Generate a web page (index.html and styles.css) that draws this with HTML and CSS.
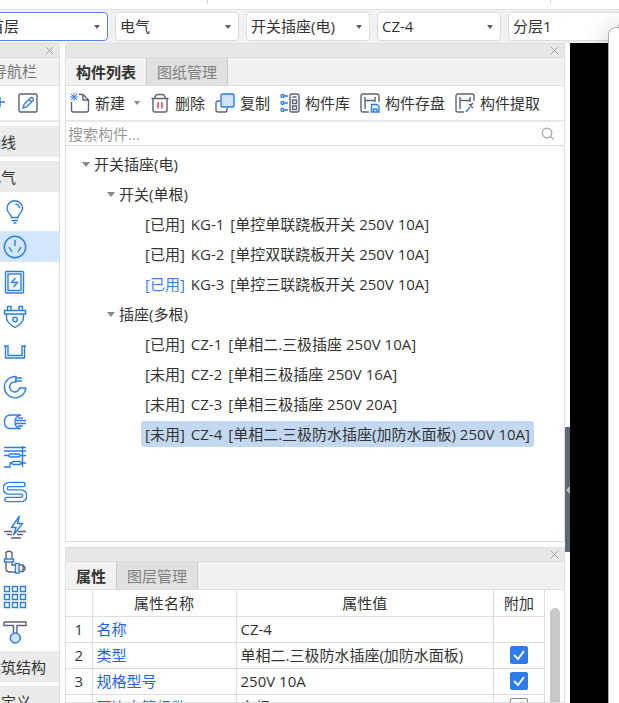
FILE: index.html
```html
<!DOCTYPE html>
<html lang="zh-CN">
<head>
    <meta charset="UTF-8">
    <meta name="viewport" content="width=device-width, initial-scale=1.0">
    <title>构件列表</title>
    <link rel="stylesheet" href="styles.css">
</head>
<body>
    <div class="ribbon"><span></span><span></span></div>

    <div class="selector-bar">
        <select class="floor active" aria-label="楼层"><option>首层</option></select>
        <select class="major" aria-label="专业"><option>电气</option></select>
        <select class="kind" aria-label="构件类型"><option>开关插座(电)</option></select>
        <select class="part" aria-label="构件"><option>CZ-4</option></select>
        <select class="layer" aria-label="分层"><option>分层1</option></select>
    </div>

    <div class="workspace">
        <nav class="sidebar">
            <div class="title-bar">
                <button class="close" aria-label="关闭"><svg viewBox="0 0 10 10"><path d="M1 1L9 9M9 1L1 9"/></svg></button>
            </div>
            <div class="nav-name"><span>导航栏</span></div>
            <div class="nav-tools">
                <button aria-label="添加"><svg class="icon" viewBox="0 0 22 22"><path d="M11 5V15M6 10H16"/></svg></button>
                <button aria-label="编辑"><svg class="icon" viewBox="0 0 22 22"><rect class="dark" x="2" y="2" width="18" height="18" rx="1.5"/><path d="M6 16L7 12.500L13.500 6Q14.500 5 15.700 6.200T16 8.500L9.500 15ZM12 7.500L14.500 10"/></svg></button>
            </div>
            <button class="group"><span>轴线</span></button>
            <button class="group"><span>电气</span></button>
            <ul class="nav-icons">
                <li><button aria-label="灯具"><svg class="icon" viewBox="0 0 24 24"><path d="M8.500 17.500C8.500 14 4 13 4 8.500A7.700 7.700 0 0 1 19.500 8.500C19.500 13 15 14 15 17.500ZM8.500 20.500H15M10.500 23H13.500M12.500 4Q16 4.500 16.500 8"/></svg></button></li>
                <li class="current"><button aria-label="开关插座"><svg class="icon" viewBox="0 0 24 24"><circle cx="12" cy="12" r="10.700"/><path d="M12 5V11M6 12L9 17M18 12L15 17"/></svg></button></li>
                <li><button aria-label="配电箱"><svg class="icon" viewBox="0 0 24 24"><rect x="2.500" y="1.500" width="18" height="21.500" rx="1"/><rect x="5" y="4" width="13" height="16.500"/><path d="M12.500 8L8.500 12.500H14.500L10.500 17"/></svg></button></li>
                <li><button aria-label="电气设备"><svg class="icon" viewBox="0 0 24 24"><path d="M1.500 5.500H22.500V9H1.500ZM4.500 5.500V1.500H8V5.500M16 5.500V1.500H19.500V5.500M3.500 9V13Q4 18 12 22.500Q20 18 20.500 13V9"/><circle cx="12" cy="14.500" r="2.300"/></svg></button></li>
                <li><button aria-label="桥架"><svg class="icon" viewBox="0 0 24 24"><path d="M1 6H5V15.500H19V6H23M2.500 6V18H21.500V6"/></svg></button></li>
                <li><button aria-label="电线导管"><svg class="icon" viewBox="0 0 24 24"><path d="M13 1.500A10.700 10.700 0 1 0 22.800 13H16.500A5 5 0 1 1 12.500 7ZM13 1.500V7.500M13 3H19M13 6H19"/></svg></button></li>
                <li><button aria-label="电缆导管"><svg class="icon" viewBox="0 0 24 24"><path d="M18 5H7Q1.500 5.500 1.500 12T7 18.500H18M18 5Q12 6 12 12T18 18.500M15 8H20M13 10.500H23M13 13.500H23M15 16H20"/></svg></button></li>
                <li><button aria-label="综合管线"><svg class="icon" viewBox="0 0 24 24"><path d="M1 2.500H23M1 6H23M1 10.500H6M17 10.500H23M19.500 1V22M1 22H7V18H9M18 18H23"/><rect x="6" y="9" width="11" height="3" rx="1.500"/><rect x="9" y="16.500" width="9" height="3" rx="1.500"/></svg></button></li>
                <li><button aria-label="地暖盘管"><svg class="icon pipe" viewBox="0 0 24 24"><path d="M20 4.500H6A3.700 3.700 0 0 0 6 12H18A3.700 3.700 0 0 1 18 19.500H4"/><path class="inner" d="M20 4.500H6A3.700 3.700 0 0 0 6 12H18A3.700 3.700 0 0 1 18 19.500H4"/></svg></button></li>
                <li><button aria-label="接地"><svg class="icon" viewBox="0 0 24 24"><path d="M16.500 1L8.500 12.500H13L10.500 20L19.500 8.500H14.500Z"/><path class="dark" d="M1 16.500H9M15 16.500H23M4 19.500H9M14 19.500H20M8 23H18"/></svg></button></li>
                <li><button aria-label="管件"><svg class="icon" viewBox="0 0 24 24"><path class="dark" d="M3 9V2.500Q6 0 9 2.500V9M3 12V18.500Q3 22 7 22H12M9 12V15H12M16 15H20Q24 18 20 21.500H16M20 15V21.500"/><path d="M1.500 9H10.500V12H1.500ZM12.500 13.500H16V23H12.500Z"/></svg></button></li>
                <li><button aria-label="设备表"><svg class="icon" viewBox="0 0 24 24"><path d="M1.500 1.500H6.500V6.500H1.500ZM9.500 1.500H14.500V6.500H9.500ZM17.500 1.500H22.500V6.500H17.500ZM1.500 9.500H6.500V14.500H1.500ZM9.500 9.500H14.500V14.500H9.500ZM17.500 9.500H22.500V14.500H17.500ZM1.500 17.500H6.500V22.500H1.500ZM9.500 17.500H14.500V22.500H9.500ZM17.500 17.500H22.500V22.500H17.500Z"/></svg></button></li>
                <li><button aria-label="零星构件"><svg class="icon" viewBox="0 0 24 24"><path class="dark" d="M1 2H23V5.500H14V14M1 2V5.500H10.500V14"/><circle class="fill" cx="12.300" cy="18" r="5"/></svg></button></li>
            </ul>
            <button class="group"><span>建筑结构</span></button>
            <button class="group"><span>自定义</span></button>
        </nav>

        <main class="panels">
            <section class="panel component-panel">
                <div class="title-bar">
                    <button class="close" aria-label="关闭"><svg viewBox="0 0 10 10"><path d="M1 1L9 9M9 1L1 9"/></svg></button>
                </div>
                <div class="tabs">
                    <button class="tab selected">构件列表</button>
                    <button class="tab">图纸管理</button>
                </div>
                <div class="toolbar">
                    <button><svg class="icon" viewBox="0 0 20 20"><path class="dark" d="M1.500 9V17Q1.500 19 3.500 19H16.500Q18.500 19 18.500 17V7L13 1.500H9M13 1.500V7H18.500"/><path d="M4 0V8M0 4H8M1 1L7 7M7 1L1 7" stroke-width="1"/></svg>新建<i class="arrow"></i></button>
                    <button><svg class="icon" viewBox="0 0 20 20"><path class="dark" d="M1.500 5.500H18.500M5 5.500Q5 1.500 8 1.500H12Q15 1.500 15 5.500M3 5.500V17Q3 19 5 19H15Q17 19 17 17V5.500"/><path class="red" d="M8 9V15.500M12 9V15.500"/></svg>删除</button>
                    <button><svg class="icon" viewBox="0 0 20 20"><path class="dark" d="M5 8H3Q1 8 1 10V17Q1 19 3 19H10Q12 19 12 17V15"/><rect class="fill" x="6" y="1" width="13" height="13" rx="1.500"/></svg>复制</button>
                    <button><svg class="icon" viewBox="0 0 20 20"><rect class="dark" x="10" y="1" width="9" height="18" rx="1.500"/><path class="dark" d="M12.500 4H16.500M12.500 7H16.500V10.500H12.500ZM12.500 13H16.500V16.500H12.500Z"/><path d="M4 3H8M4 10H8M4 17H8"/><circle cx="2.500" cy="3" r="1.500"/><circle cx="2.500" cy="10" r="1.500"/><circle cx="2.500" cy="17" r="1.500"/></svg>构件库</button>
                    <button><svg class="icon" viewBox="0 0 20 20"><path class="dark" d="M9 19H3Q1 19 1 17V3Q1 1 3 1H17Q19 1 19 3V9M5 4V16M5 7.500H15M15 4V9"/><path d="M11.500 11.500H17L19 13.500V19H11.500ZM13.500 19V16H17V19"/></svg>构件存盘</button>
                    <button><svg class="icon" viewBox="0 0 20 20"><path class="dark" d="M9 19H3Q1 19 1 17V3Q1 1 3 1H17Q19 1 19 3V8M5 4V16M5 7.500H15M15 4V9M14 11L18 15M15 13L18 10"/><path d="M15 14L11 19"/></svg>构件提取</button>
                </div>
                <div class="search">
                    <input type="text" placeholder="搜索构件..." aria-label="搜索构件">
                    <svg viewBox="0 0 14 14"><circle cx="6" cy="6" r="4.700"/><path d="M9.500 9.500L12.500 12.500"/></svg>
                </div>
                <ul class="tree">
                    <li class="root"><i class="arrow"></i>开关插座(电)</li>
                    <li class="branch"><i class="arrow"></i>开关(单根)</li>
                    <li class="leaf"><div class="item"><span>[已用]</span><span>KG-1</span><span>[单控单联跷板开关 250V 10A]</span></div></li>
                    <li class="leaf"><div class="item"><span>[已用]</span><span>KG-2</span><span>[单控双联跷板开关 250V 10A]</span></div></li>
                    <li class="leaf"><div class="item"><span class="drawn">[已用]</span><span>KG-3</span><span>[单控三联跷板开关 250V 10A]</span></div></li>
                    <li class="branch"><i class="arrow"></i>插座(多根)</li>
                    <li class="leaf"><div class="item"><span>[已用]</span><span>CZ-1</span><span>[单相二.三极插座 250V 10A]</span></div></li>
                    <li class="leaf"><div class="item"><span>[未用]</span><span>CZ-2</span><span>[单相三极插座 250V 16A]</span></div></li>
                    <li class="leaf"><div class="item"><span>[未用]</span><span>CZ-3</span><span>[单相三极插座 250V 20A]</span></div></li>
                    <li class="leaf"><div class="item selected"><span>[未用]</span><span>CZ-4</span><span>[单相二.三极防水插座(加防水面板) 250V 10A]</span></div></li>
                </ul>
            </section>

            <section class="panel property-panel">
                <div class="title-bar">
                    <button class="close" aria-label="关闭"><svg viewBox="0 0 10 10"><path d="M1 1L9 9M9 1L1 9"/></svg></button>
                </div>
                <div class="tabs">
                    <button class="tab selected">属性</button>
                    <button class="tab">图层管理</button>
                </div>
                <div class="table-wrap">
                    <table>
                        <thead>
                            <tr><th class="num"></th><th class="name">属性名称</th><th>属性值</th><th class="extra">附加</th></tr>
                        </thead>
                        <tbody>
                            <tr><td>1</td><td>名称</td><td>CZ-4</td><td></td></tr>
                            <tr><td>2</td><td>类型</td><td>单相二.三极防水插座(加防水面板)</td><td><input type="checkbox" aria-label="类型附加" checked></td></tr>
                            <tr><td>3</td><td>规格型号</td><td>250V 10A</td><td><input type="checkbox" aria-label="规格型号附加" checked></td></tr>
                            <tr><td>4</td><td>可连立管根数</td><td>多根</td><td><input type="checkbox" aria-label="可连立管根数附加"></td></tr>
                        </tbody>
                    </table>
                    <div class="scrollbar"></div>
                </div>
            </section>
        </main>

        <div class="splitter"><button aria-label="收起"><svg viewBox="0 0 5 8"><path d="M5 0V8L1 4Z"/></svg></button></div>
        <div class="canvas"></div>
    </div>

    <aside class="float-window"></aside>
</body>
</html>
```
FILE: styles.css
```css
* {
    box-sizing: border-box;
}

body {
    margin: 0;
    height: 100vh;
    display: flex;
    flex-direction: column;
    overflow: hidden;
    position: relative;
    background-color: #f1f1f1;
    color: #333;
    font-family: "Open Sans", "Noto Sans CJK SC", sans-serif;
    font-size: 15px;
    line-height: 20px;
}

button, input, select {
    font: inherit;
    color: inherit;
    margin: 0;
}

button {
    border: none;
    background: none;
    padding: 0;
}

ul {
    list-style: none;
    margin: 0;
    padding: 0;
}

/* Icons */
.icon {
    flex: none;
    width: 20px;
    height: 20px;
    fill: none;
    stroke: #2b7de9;
    stroke-width: 1.4;
}

.icon .dark {
    stroke: #5b6378;
}

.icon .red {
    stroke: #e84040;
}

.icon .fill {
    fill: #cfe2fc;
}

.pipe {
    stroke-width: 5.6;
    stroke-linecap: round;
}

.pipe .inner {
    stroke: #fff;
    stroke-width: 2.8;
}

.arrow {
    flex: none;
    border: 4px solid transparent;
    border-top: 5px solid #888;
    border-bottom: none;
}

/* Top bars */
.ribbon {
    flex: none;
    display: flex;
    justify-content: space-between;
    height: 10px;
    padding: 0 68px 5px 207px;
    background-color: #fff;
    border-bottom: 1px solid #e2e2e2;
}

.ribbon span {
    width: 1px;
    background-color: #d5d5d5;
}

.selector-bar {
    flex: none;
    display: flex;
    gap: 7px;
    height: 33px;
    padding: 2px 0;
    margin-left: -16px;
}

.selector-bar select {
    flex: none;
    appearance: none;
    width: 124px;
    height: 29px;
    padding: 0 20px 2px 4px;
    border: 1px solid #dcdcdc;
    border-radius: 4px;
    background: #fff url("data:image/svg+xml,%3Csvg xmlns='http://www.w3.org/2000/svg' width='6' height='4'%3E%3Cpath d='M0 0H6L3 4Z' fill='%23555f70'/%3E%3C/svg%3E") no-repeat right 7px center;
}

.selector-bar .active {
    border-color: #5b8ae0;
}

/* Workspace */
.workspace {
    flex: 1;
    min-height: 0;
    display: flex;
}

.title-bar {
    flex: none;
    display: flex;
    justify-content: flex-end;
    align-items: center;
    height: 15px;
    padding-right: 5px;
    background-color: #e7e7e7;
    border-top: 1px solid #ddd;
    border-bottom: 1px solid #ddd;
}

.close {
    display: flex;
}

.close svg {
    width: 9px;
    height: 9px;
    fill: none;
    stroke: #999;
}

/* Sidebar */
.sidebar {
    flex: none;
    display: flex;
    flex-direction: column;
    width: 60px;
    background-color: #fff;
    border-right: 1px solid #ddd;
}

.nav-name {
    flex: none;
    display: flex;
    height: 28px;
    padding: 3px 0;
    margin-left: -8px;
    background-color: #f1f1f1;
    border-bottom: 1px solid #e2e2e2;
    color: #777;
}

.nav-tools {
    flex: none;
    display: flex;
    align-items: center;
    gap: 6px;
    height: 36px;
    margin-left: -11px;
    border-bottom: 2px solid #e8e8e8;
}

.nav-tools button {
    display: flex;
}

.nav-tools .icon {
    width: 22px;
    height: 22px;
}

.group {
    flex: none;
    display: flex;
    align-items: center;
    height: 35px;
    border-top: 4px solid #fff;
    background-color: #ebebeb;
    white-space: nowrap;
}

.group span {
    margin-left: -14px;
}

.nav-icons li {
    height: 31px;
    margin-top: 4px;
    display: flex;
    align-items: center;
    padding-left: 3px;
}

.nav-icons button {
    display: flex;
}

.nav-icons .icon {
    width: 24px;
    height: 24px;
}

.nav-icons .current {
    background-color: #d3e7fe;
}

/* Panels */
.panels {
    flex: none;
    display: flex;
    flex-direction: column;
    gap: 5px;
    width: 505px;
    padding-left: 5px;
    background-color: #fff;
}

.panel {
    display: flex;
    flex-direction: column;
    border: 1px solid #ddd;
    border-top: none;
}

.component-panel {
    flex: none;
    height: 499px;
}

.property-panel {
    flex: 1;
    min-height: 0;
}

.tabs {
    flex: none;
    display: flex;
    height: 28px;
    background-color: #f1f1f1;
    border-bottom: 1px solid #ddd;
}

.tab {
    padding: 0 10px;
    border-right: 1px solid #c9ccd2;
    background-color: #e0e0e0;
    color: #808080;
}

.tab.selected {
    background-color: #f1f1f1;
    color: #333;
    font-weight: bold;
}

.toolbar {
    flex: none;
    display: flex;
    align-items: center;
    gap: 10px;
    height: 36px;
    padding-left: 4px;
    border-bottom: 2px solid #e8e8e8;
}

.toolbar button {
    display: flex;
    align-items: center;
    gap: 5px;
    white-space: nowrap;
}

.toolbar .arrow {
    margin-left: 4px;
    border-width: 4px 3px 0;
}

.search {
    flex: none;
    display: flex;
    align-items: center;
    height: 24px;
    padding: 0 9px 0 2px;
    border-bottom: 1px solid #ddd;
}

.search input {
    flex: 1;
    min-width: 0;
    padding: 0;
    border: none;
    outline: none;
    background: none;
}

.search input::placeholder {
    color: #999;
}

.search svg {
    width: 14px;
    height: 14px;
    fill: none;
    stroke: #aaa;
    stroke-width: 1.5;
}

.tree {
    padding-top: 3px;
}

.tree li {
    display: flex;
    align-items: center;
    gap: 4px;
    height: 30px;
    white-space: nowrap;
}

.tree .root {
    padding-left: 16px;
}

.tree .branch {
    padding-left: 41px;
}

.tree .leaf {
    padding-left: 75px;
}

.item {
    display: flex;
    gap: 6px;
    padding: 3px 4px;
    border-radius: 3px;
}

.item.selected {
    background-color: #c1d8f0;
}

.drawn {
    color: #3c7ef0;
}

/* Property table */
.table-wrap {
    flex: 1;
    min-height: 0;
    display: flex;
    overflow: hidden;
}

table {
    flex: 1;
    align-self: flex-start;
    table-layout: fixed;
    border-collapse: collapse;
}

th, td {
    height: 26px;
    padding: 0 4px;
    border-right: 1px solid #ddd;
    border-bottom: 1px solid #ddd;
    font-weight: normal;
    white-space: nowrap;
}

.num {
    width: 26px;
}

.name {
    width: 144px;
}

.extra {
    width: 51px;
}

td:first-child, td:last-child {
    text-align: center;
}

td:nth-child(2) {
    color: #1b62f5;
}

input[type="checkbox"] {
    appearance: none;
    display: block;
    width: 18px;
    height: 18px;
    margin: 0 auto;
    border: 1px solid #888;
    border-radius: 2px;
}

input[type="checkbox"]:checked {
    border-color: #2b7de9;
    background: #2b7de9 url("data:image/svg+xml,%3Csvg xmlns='http://www.w3.org/2000/svg' width='16' height='16'%3E%3Cpath d='M3 8L7 12L13 4' fill='none' stroke='white' stroke-width='2'/%3E%3C/svg%3E") center no-repeat;
}

.scrollbar {
    flex: none;
    width: 10px;
    margin: 18px 4px 0 5px;
    border-radius: 5px 5px 0 0;
    background-color: #c8c8c8;
}

/* Drawing area */
.splitter {
    flex: none;
    width: 5px;
    background-color: #fff;
}

.splitter button {
    display: flex;
    align-items: center;
    width: 5px;
    height: 125px;
    margin-top: 384px;
    background-color: #5d6875;
}

.splitter svg {
    width: 5px;
    height: 8px;
    fill: #b5bac0;
}

.canvas {
    flex: 1;
    background-color: #000;
}

.float-window {
    position: absolute;
    top: 27px;
    right: -12px;
    bottom: -12px;
    width: 23px;
    border: 1px solid #aaa;
    border-radius: 8px;
    background-color: #fff;
    box-shadow: 0 0 24px rgba(0, 0, 0, 0.2);
}
```
